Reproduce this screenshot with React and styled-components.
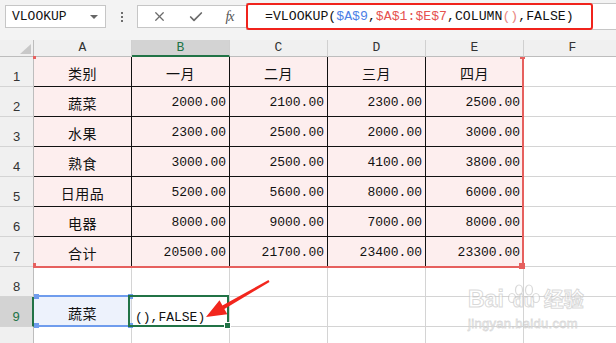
import React from 'react'
import styled, {createGlobalStyle} from 'styled-components'
import {X, Check} from 'lucide-react'

const HEAD_W = 34
const COL_W = 98
const HEAD_H = 17
const ROW_H = 30

const GlobalStyle = createGlobalStyle `
  html, body {
    margin: 0;
    padding: 0;
    background: #fff;
  }
  body {
    width: 616px;
    height: 343px;
    overflow: hidden;
  }
`

const Page = styled.div `
  position: relative;
  width: 616px;
  height: 343px;
  overflow: hidden;
  background: #fff;
  font-family: "Liberation Mono", monospace;
`

const TopBar = styled.div `
  height: 40px;
  background: #f3f3f3;
  display: flex;
  align-items: flex-start;
  box-sizing: border-box;
  padding-top: 3px;
`

const NameBox = styled.div `
  margin: 2px 0 0 5px;
  width: 101px;
  height: 23px;
  box-sizing: border-box;
  border: 1px solid #c6c6c6;
  background: #fff;
  display: flex;
  align-items: center;
  justify-content: space-between;
  padding: 0 7px 0 6px;
  font-size: 13px;
  color: #111;
`

const Caret = styled.span `
  width: 0;
  height: 0;
  border-left: 4px solid transparent;
  border-right: 4px solid transparent;
  border-top: 4px solid #666;
`

const Dots = styled.div `
  width: 31px;
  height: 27px;
  display: flex;
  flex-direction: column;
  align-items: center;
  justify-content: center;
  gap: 2px;
  & span {
    width: 2px;
    height: 2px;
    background: #6d6d6d;
  }
`

const ButtonBox = styled.div `
  margin-top: 2px;
  width: 109px;
  height: 23px;
  box-sizing: border-box;
  border: 1px solid #c6c6c6;
  border-right: 0;
  background: #fff;
  display: flex;
  align-items: center;
  justify-content: space-around;
  padding: 0 2px 0 4px;
  color: #6b6b6b;
`

const Fx = styled.span `
  font-family: "Liberation Serif", serif;
  font-style: italic;
  font-size: 14px;
  color: #555;
  letter-spacing: -1px;
`

const FormulaBar = styled.div `
  flex: 1;
  height: 27px;
  box-sizing: border-box;
  border-top: 1px solid #c6c6c6;
  border-bottom: 1px solid #c6c6c6;
  background: #fff;
`

const FormulaMark = styled.div `
  width: 347px;
  height: 27px;
  margin-top: -1px;
  box-sizing: border-box;
  border: 2.5px solid #f0231c;
  border-radius: 3px;
  display: flex;
  align-items: center;
  padding-left: 17px;
  font-size: 13.2px;
  color: #111;
  white-space: pre;
`

const Tok = styled.span `
  color: ${p => p.$c || '#111'};
`

const Sheet = styled.div `
  position: relative;
  display: grid;
  grid-template-columns: ${HEAD_W}px repeat(6, ${COL_W}px);
  grid-template-rows: ${HEAD_H}px repeat(10, ${ROW_H}px);
`

const Corner = styled.div `
  background: #f0f0f0;
  box-sizing: border-box;
  border-right: 1px solid #bdbdbd;
  border-bottom: 1px solid #bdbdbd;
  display: flex;
  align-items: flex-end;
  justify-content: flex-end;
  padding: 0 2px 2px 0;
  &::after {
    content: '';
    border-left: 11px solid transparent;
    border-bottom: 10px solid #c8c8c8;
  }
`

const ColHead = styled.div `
  box-sizing: border-box;
  background: ${p => p.$active ? '#d3d3d3' : '#f0f0f0'};
  border-right: 1px solid #d0d0d0;
  border-bottom: ${p => p.$active ? '2px solid #217346' : '1px solid #bdbdbd'};
  color: ${p => p.$active ? '#217346' : '#333'};
  font-size: 13px;
  line-height: 16px;
  text-align: center;
`

const RowHead = styled.div `
  box-sizing: border-box;
  background: ${p => p.$active ? '#d3d3d3' : '#f0f0f0'};
  border-right: ${p => p.$active ? '2px solid #217346' : '1px solid #bdbdbd'};
  border-bottom: 1px solid #d4d4d4;
  color: ${p => p.$active ? '#217346' : '#333'};
  font-family: "Liberation Sans", Arial, sans-serif;
  font-size: 13px;
  display: flex;
  align-items: flex-end;
  justify-content: center;
  padding-bottom: 2px;
`

const Cell = styled.div `
  box-sizing: border-box;
  background: ${p => p.$fill || '#fff'};
  border-right: 1px solid ${p => p.$line || '#d4d4d4'};
  border-bottom: 1px solid ${p => p.$line || '#d4d4d4'};
  display: flex;
  align-items: ${p => p.$bottom ? 'flex-end' : 'center'};
  justify-content: ${p => p.$align || 'center'};
  padding: ${p => p.$bottom ? '0 0 1px 3px' : '2px 3px 0 3px'};
  font-size: 13px;
  color: #111;
  white-space: nowrap;
`

const Han = styled.span `
  font-family: "Noto Sans CJK SC", sans-serif;
  font-size: 14px;
  letter-spacing: 0.5px;
`

const RangeBox = styled.div `
  position: absolute;
  left: ${HEAD_W}px;
  top: ${HEAD_H}px;
  width: ${COL_W * 5}px;
  height: ${ROW_H * 7 + 1}px;
  box-sizing: border-box;
  border-right: 2px solid #e6605e;
  border-bottom: 2px solid #e6605e;
  pointer-events: none;
`

const Handle = styled.span `
  position: absolute;
  width: ${p => p.$w || 5}px;
  height: ${p => p.$h || 5}px;
  background: ${p => p.$c};
  ${p => p.$pos};
`

const RefBox = styled.div `
  position: absolute;
  left: ${HEAD_W}px;
  top: ${HEAD_H + ROW_H * 8 - 2}px;
  width: ${COL_W - 2}px;
  height: 32px;
  box-sizing: border-box;
  border-top: 2px solid #6f9ced;
  border-bottom: 2px solid #6f9ced;
`

const ActiveBox = styled.div `
  position: absolute;
  left: ${HEAD_W + COL_W - 4}px;
  top: ${HEAD_H + ROW_H * 8 - 2}px;
  width: 101px;
  height: 32px;
  box-sizing: border-box;
  border: 2px solid #217346;
`

const Arrow = styled.svg `
  position: absolute;
  left: 0;
  top: 0;
  pointer-events: none;
`

const Watermark = styled.div `
  position: absolute;
  left: 468px;
  top: 270px;
  width: 124px;
  display: flex;
  flex-direction: column;
  align-items: flex-start;
  font-family: "Liberation Sans", Arial, sans-serif;
  color: rgba(255, 255, 255, 0.6);
  -webkit-text-stroke: 1px rgba(185, 185, 185, 0.55);
  pointer-events: none;
`

const MarkLine = styled.div `
  display: flex;
  align-items: flex-end;
  height: 40px;
  font-weight: bold;
  font-size: 23px;
  line-height: 22px;
`

const Paw = styled.div `
  display: flex;
  flex-direction: column;
  align-items: center;
  margin: 0 2px;
  & svg {
    display: block;
  }
`

const Du = styled.span `
  font-size: 18px;
  line-height: 18px;
  margin-top: -14px;
`

const MarkHan = styled.span `
  font-family: "Noto Sans CJK SC", sans-serif;
  font-size: 20px;
  line-height: 22px;
`

const MarkUrl = styled.div `
  margin-top: 6px;
  font-size: 13px;
  letter-spacing: 0.3px;
  -webkit-text-stroke: 0.8px rgba(185, 185, 185, 0.55);
`

const letters = ['A', 'B', 'C', 'D', 'E', 'F']

const rows = [
  ['类别', '一月', '二月', '三月', '四月'],
  ['蔬菜', '2000.00', '2100.00', '2300.00', '2500.00'],
  ['水果', '2300.00', '2500.00', '2000.00', '3000.00'],
  ['熟食', '3000.00', '2500.00', '4100.00', '3800.00'],
  ['日用品', '5200.00', '5600.00', '8000.00', '6000.00'],
  ['电器', '8000.00', '9000.00', '7000.00', '8000.00'],
  ['合计', '20500.00', '21700.00', '23400.00', '23300.00']
]

const formula = [
  ['=VLOOKUP('],
  ['$A$9', '#4d7fe6'],
  [','],
  ['$A$1:$E$7', '#e5524f'],
  [',COLUMN'],
  ['()', '#e98784'],
  [',FALSE)']
]

const PINK = '#fdeeee'
const RED = '#e6605e'
const BLUE = '#6f9ced'

const TableRow = ({cells, index}) => (<>
  <RowHead>{index + 1}</RowHead>
  {cells.map((val, i) => {
    const isText = i === 0 || index === 0
    return <Cell key={i} $fill={PINK} $line="#111" $align={isText ? 'center' : 'flex-end'}>
      {isText ? <Han>{val}</Han> : val}
    </Cell>
  })}
  <Cell/>
</>)

// row 10 lies below the window edge, so its number is not drawn
const BlankRow = ({n, label = n, children}) => (<>
  <RowHead $active={n === 9}>{label}</RowHead>
  {children || letters.map(l => <Cell key={l}/>)}
</>)

export default function App() {
  return (<Page>
    <GlobalStyle/>
    <TopBar>
      <NameBox>VLOOKUP<Caret/></NameBox>
      <Dots><span/><span/><span/></Dots>
      <ButtonBox>
        <X size={15} strokeWidth={2}/>
        <Check size={16} strokeWidth={2.6}/>
        <Fx>fx</Fx>
      </ButtonBox>
      <FormulaBar>
        <FormulaMark>
          {formula.map(([t, c], i) => <Tok key={i} $c={c}>{t}</Tok>)}
        </FormulaMark>
      </FormulaBar>
    </TopBar>

    <Sheet>
      <Corner/>
      {letters.map(l => <ColHead key={l} $active={l === 'B'}>{l}</ColHead>)}
      {rows.map((r, i) => <TableRow key={i} index={i} cells={r}/>)}
      <BlankRow n={8}/>
      <BlankRow n={9}>
        <Cell $fill="#edf2fc"><Han>蔬菜</Han></Cell>
        <Cell $align="flex-start" $bottom>(),FALSE)</Cell>
        {letters.slice(2).map(l => <Cell key={l}/>)}
      </BlankRow>
      <BlankRow n={10} label=""/>

      <RangeBox>
        <Handle $c={RED} $w={3} $h={3} $pos="left: -1px; top: -1px;"/>
        <Handle $c={RED} $w={5} $h={2} $pos="right: -3px; top: 0;"/>
        <Handle $c={RED} $w={3} $h={5} $pos="left: -1px; bottom: -2px;"/>
        <Handle $c={RED} $w={6} $h={6} $pos="right: -3px; bottom: -3px;"/>
      </RangeBox>
      <RefBox>
        <Handle $c={BLUE} $pos="left: 0; top: -3px;"/>
        <Handle $c={BLUE} $pos="right: -3px; top: -3px;"/>
        <Handle $c={BLUE} $pos="left: 0; bottom: -3px;"/>
        <Handle $c={BLUE} $pos="right: -3px; bottom: -3px;"/>
      </RefBox>
      <ActiveBox>
        <Handle $c="#217346" $pos="right: -4px; bottom: -4px; border: 1px solid #fff;"/>
      </ActiveBox>
    </Sheet>

    <Watermark>
      <MarkLine>
        <span>Bai</span>
        <Paw>
          <svg width="36" height="22" viewBox="0 0 36 22">
            <g fill="rgba(255,255,255,0.6)" stroke="rgba(185,185,185,0.55)" strokeWidth="1.2">
              <ellipse cx="6" cy="14" rx="3.5" ry="4.5"/>
              <ellipse cx="13" cy="6" rx="3.5" ry="5"/>
              <ellipse cx="23" cy="6" rx="3.5" ry="5"/>
              <ellipse cx="30" cy="14" rx="3.5" ry="4.5"/>
            </g>
          </svg>
          <Du>du</Du>
        </Paw>
        <MarkHan>经验</MarkHan>
      </MarkLine>
      <MarkUrl>jingyan.baidu.com</MarkUrl>
    </Watermark>

    <Arrow width="616" height="343">
      <polygon fill="#f2261d"
        points="206,317 219.5,300.2 222.4,305.5 268.5,280.1 269.5,281.9 224.4,308.9 227.3,314.2"/>
    </Arrow>
  </Page>)
}
